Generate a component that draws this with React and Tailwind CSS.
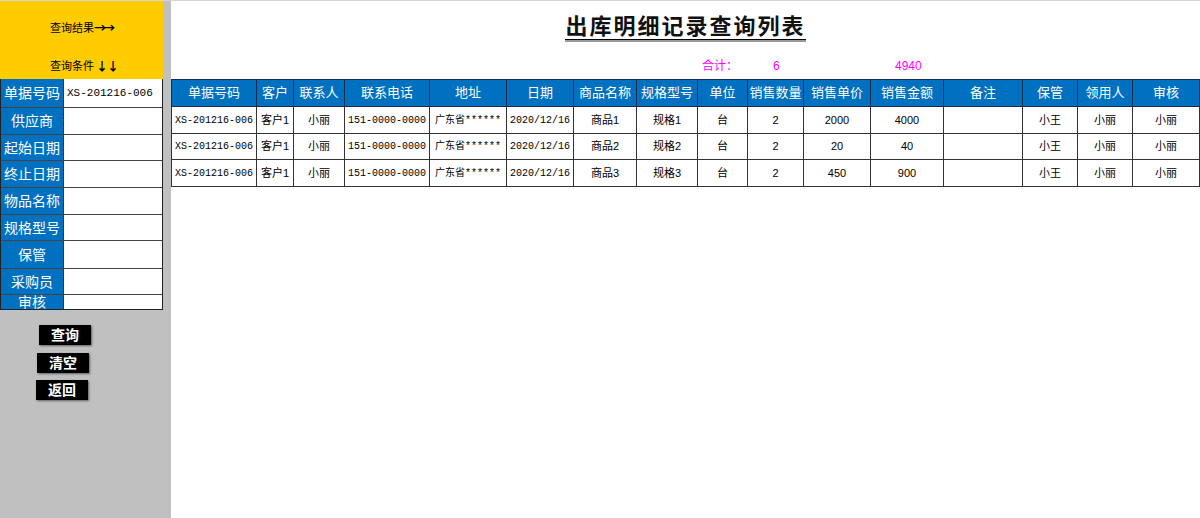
const sans = { fontFamily: '"Liberation Sans", "Noto Sans CJK SC", sans-serif' };
const cjk = { fontFamily: '"Noto Sans CJK SC", sans-serif' };
const mono = { fontFamily: '"Liberation Mono", "Noto Sans CJK SC", monospace' };

const cols = [
  ['单据号码', 85],
  ['客户', 37],
  ['联系人', 51],
  ['联系电话', 85],
  ['地址', 77],
  ['日期', 67],
  ['商品名称', 63],
  ['规格型号', 61],
  ['单位', 50],
  ['销售数量', 56],
  ['销售单价', 67],
  ['销售金额', 73],
  ['备注', 79],
  ['保管', 55],
  ['领用人', 55],
  ['审核', 67],
];

const colClass = {
  85: 'w-[85px]',
  37: 'w-[37px]',
  51: 'w-[51px]',
  77: 'w-[77px]',
  67: 'w-[67px]',
  63: 'w-[63px]',
  61: 'w-[61px]',
  50: 'w-[50px]',
  56: 'w-[56px]',
  73: 'w-[73px]',
  79: 'w-[79px]',
  55: 'w-[55px]',
};

const rows = [
  ['XS-201216-006', '客户1', '小丽', '151-0000-0000', '广东省******', '2020/12/16', '商品1', '规格1', '台', '2', '2000', '4000', '', '小王', '小丽', '小丽'],
  ['XS-201216-006', '客户1', '小丽', '151-0000-0000', '广东省******', '2020/12/16', '商品2', '规格2', '台', '2', '20', '40', '', '小王', '小丽', '小丽'],
  ['XS-201216-006', '客户1', '小丽', '151-0000-0000', '广东省******', '2020/12/16', '商品3', '规格3', '台', '2', '450', '900', '', '小王', '小丽', '小丽'],
];

const monoCols = [0, 3, 4, 5];

const fields = [
  ['单据号码', 'XS-201216-006', 'h-[28px]'],
  ['供应商', '', 'h-[27px]'],
  ['起始日期', '', 'h-[26px]'],
  ['终止日期', '', 'h-[27px]'],
  ['物品名称', '', 'h-[27px]'],
  ['规格型号', '', 'h-[26px]'],
  ['保管', '', 'h-[28px]'],
  ['采购员', '', 'h-[26px]'],
  ['审核', '', 'h-[15px]'],
];

function SideButton({ children, className }) {
  return (
    <button
      className={`h-[20px] w-[52px] bg-black text-white text-[14px] font-bold leading-[20px] shadow-[1px_1px_2px_rgba(0,0,0,0.5)] ${className}`}
    >
      {children}
    </button>
  );
}

export default function App() {
  return (
    <div className="flex w-[1200px] h-[518px] overflow-hidden bg-white" style={sans}>
      <aside className="w-[171px] shrink-0 bg-[#c0c0c0] border-t border-[#d4d4d4]">
        <div className="w-[163px] h-[78px] bg-[#ffcc00] flex flex-col items-start pl-[50px] pt-[19px] text-[11px] text-black">
          <div className="leading-[16px] flex items-center">
            查询结果<span className="text-[12px] font-bold tracking-[-3px]" style={cjk}>→→</span>
          </div>
          <div className="leading-[16px] mt-[22px] flex items-center">
            查询条件<span className="text-[12px] font-bold ml-[2px] tracking-[-1px]" style={cjk}>↓↓</span>
          </div>
        </div>
        <div className="w-[163px] border border-[#222] border-t-0">
          {fields.map(([label, value, h], i) => (
            <div
              key={label}
              className={`flex ${h} ${i > 0 ? 'border-t border-[#444]' : ''}`}
            >
              <div className="w-[63px] shrink-0 bg-[#0070c0] text-white text-[14px] flex items-center justify-center overflow-hidden leading-none border-r border-[#333]">
                {label}
              </div>
              <div
                className="flex-1 bg-white flex items-center pl-[3px] text-[11px] text-black"
                style={mono}
              >
                {value}
              </div>
            </div>
          ))}
        </div>
        <div className="flex flex-col mt-[15px] gap-[7px]">
          <SideButton className="ml-[39px]">查询</SideButton>
          <SideButton className="ml-[37px] mt-[1px]">清空</SideButton>
          <SideButton className="ml-[36px]">返回</SideButton>
        </div>
      </aside>

      <main className="flex-1 border-t border-[#d4d4d4]">
        <div className="h-[78px] flex flex-col">
          <div className="flex justify-center pt-[14px]">
            <span className="text-[22px] font-bold text-[#111] tracking-[2px] leading-[24px] border-b border-black shadow-[0_2px_0_#9a9a9a]">
              出库明细记录查询列表
            </span>
          </div>
          <div className="flex items-center mt-[19px] pl-[531px] text-[12px] text-[#ff00ff] leading-[14px]">
            <span className="w-[71px]">合计：</span>
            <span className="w-[122px]">6</span>
            <span>4940</span>
          </div>
        </div>
        <table className="table-fixed border-collapse w-[1028px] border border-[#222]">
          <colgroup>
            {cols.map(([name, w]) => (
              <col key={name} className={colClass[w]} />
            ))}
          </colgroup>
          <thead>
            <tr className="h-[27px] bg-[#0070c0]">
              {cols.map(([name]) => (
                <th
                  key={name}
                  className="border border-[#1a2a4a] text-white text-[13px] font-normal p-0 whitespace-nowrap overflow-hidden"
                >
                  {name}
                </th>
              ))}
            </tr>
          </thead>
          <tbody>
            {rows.map((r, ri) => (
              <tr key={ri} className={ri === 1 ? 'h-[26px]' : 'h-[27px]'}>
                {r.map((c, ci) => (
                  <td
                    key={ci}
                    className={`border border-[#333] text-black text-center p-0 whitespace-nowrap overflow-hidden ${
                      monoCols.includes(ci) ? 'text-[10px]' : 'text-[11px]'
                    }`}
                    style={monoCols.includes(ci) ? mono : undefined}
                  >
                    {c}
                  </td>
                ))}
              </tr>
            ))}
          </tbody>
        </table>
      </main>
    </div>
  );
}
